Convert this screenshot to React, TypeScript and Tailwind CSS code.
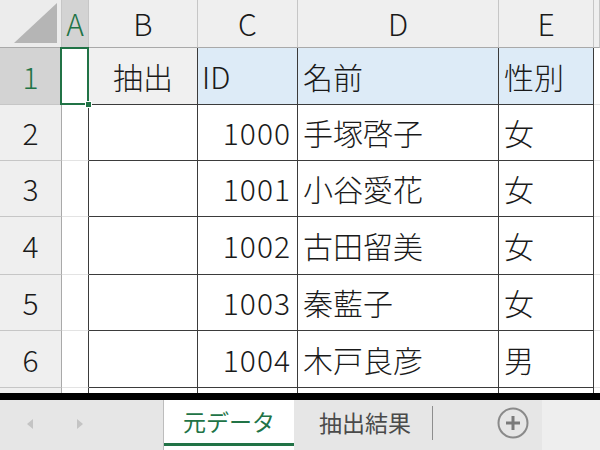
import React from 'react';

const font = { fontFamily: '"Noto Sans CJK JP", "Noto Sans", sans-serif' };

const cols = ['A', 'B', 'C', 'D', 'E', ''];

const data: string[][] = [
  ['1000', '手塚啓子', '女'],
  ['1001', '小谷愛花', '女'],
  ['1002', '古田留美', '女'],
  ['1003', '秦藍子', '女'],
  ['1004', '木戸良彦', '男'],
];

function Corner() {
  return (
    <div className="relative bg-[#ececec] border-r border-b border-r-[#c6c6c6] border-b-[#a9a9a9]">
      <svg className="absolute left-0 top-0" width="61" height="47" viewBox="0 0 61 47">
        <polygon points="14,43 57,43 57,3" fill="#b5b5b5" />
      </svg>
    </div>
  );
}

function ColHead({ label }: { label: string }) {
  const active = label === 'A';
  return (
    <div
      className={`flex items-center justify-center text-[30px] font-light border-r border-b border-r-[#c6c6c6] ${
        active ? 'bg-[#d3d3d3] text-[#217346] border-b-[#a9a9a9]' : 'bg-[#efefef] text-[#1a1a1a] border-b-[#a9a9a9]'
      }`}
    >
      {label}
    </div>
  );
}

function RowHead({ n, last }: { n: number | ''; last?: boolean }) {
  const active = n === 1;
  return (
    <div
      className={`flex items-center justify-center text-[30px] font-light border-r border-r-[#a9a9a9] ${
        last ? '' : 'border-b border-b-[#c6c6c6]'
      } ${active ? 'bg-[#d3d3d3] text-[#217346]' : 'bg-[#efefef] text-[#1a1a1a]'}`}
    >
      {n}
    </div>
  );
}

export default function App() {
  return (
    <div className="w-[600px] h-[450px] overflow-hidden bg-white flex flex-col" style={font}>
      <div className="grid grid-cols-[62px_27px_109px_100px_201px_95px_6px] grid-rows-[48px_57px_56px_56px_58px_56px_57px_5px] text-[#1a1a1a] font-light">
        <Corner />
        {cols.map((c, i) => (
          <ColHead key={i} label={c} />
        ))}

        {/* row 1 */}
        <RowHead n={1} />
        <div className="relative border-r border-b border-r-[#3b3b3b] border-b-[#e3e3e3]">
          <div className="absolute left-[-2px] top-[-1px] w-[29px] h-[58px] border-2 border-[#217346]" />
          <div className="absolute right-[-4px] bottom-[-4px] w-[7px] h-[7px] bg-[#217346] border border-white z-10" />
        </div>
        <div className="flex items-center justify-center text-[30px] bg-[#f0f0f0] border-r border-b border-[#3b3b3b]">抽出</div>
        <div className="flex items-center pl-[4px] text-[30px] bg-[#ddebf7] border-r border-b border-[#3b3b3b]">ID</div>
        <div className="flex items-center pl-[5px] text-[30px] bg-[#ddebf7] border-r border-b border-[#3b3b3b]">名前</div>
        <div className="flex items-center pl-[5px] text-[30px] bg-[#ddebf7] border-r border-b border-[#3b3b3b]">性別</div>
        <div className="border-b border-[#e3e3e3]" />

        {data.map((r, i) => (
          <React.Fragment key={i}>
            <RowHead n={i + 2} />
            <div className="border-r border-b border-r-[#3b3b3b] border-b-[#e3e3e3]" />
            <div className="border-r border-b border-[#3b3b3b]" />
            <div className="flex items-center justify-end pr-[6px] text-[30px] tracking-[1px] border-r border-b border-[#3b3b3b]">{r[0]}</div>
            <div className="flex items-center pl-[5px] text-[30px] border-r border-b border-[#3b3b3b]">{r[1]}</div>
            <div className="flex items-center pl-[5px] text-[30px] border-r border-b border-[#3b3b3b]">{r[2]}</div>
            <div className="border-b border-[#e3e3e3]" />
          </React.Fragment>
        ))}

        {/* partial row 7 */}
        <RowHead n="" last />
        <div className="border-r border-r-[#3b3b3b]" />
        <div className="border-r border-[#3b3b3b]" />
        <div className="border-r border-[#3b3b3b]" />
        <div className="border-r border-[#3b3b3b]" />
        <div className="border-r border-[#3b3b3b]" />
        <div />
      </div>

      <div className="h-[7px] bg-black" />

      {/* sheet tabs */}
      <div className="h-[50px] flex bg-[#e6e6e6]">
        <div className="w-[163px] flex items-center pb-[2px]">
          <svg className="ml-[26px]" width="8" height="12" viewBox="0 0 8 12">
            <polygon points="7,1 1,6 7,11" fill="#c4c4c4" />
          </svg>
          <svg className="ml-[42px]" width="8" height="12" viewBox="0 0 8 12">
            <polygon points="1,1 7,6 1,11" fill="#c4c4c4" />
          </svg>
        </div>
        <div className="w-[131px] flex flex-col bg-white border-l border-[#bdbdbd]">
          <div className="flex-1 flex items-center justify-center text-[23px] text-[#217346]">元データ</div>
          <div className="h-[3px] bg-[#217346] mb-[4px]" />
        </div>
        <div className="w-[138px] flex items-center justify-center text-[23px] text-[#4a4a4a] pb-[6px] pl-[4px]">抽出結果</div>
        <div className="flex items-center pb-[4px]">
          <div className="w-px h-[34px] bg-[#8e8e8e]" />
        </div>
        <div className="w-[109px] flex items-center justify-end pr-[13px] pb-[4px]">
          <svg width="32" height="32" viewBox="0 0 32 32">
            <circle cx="16" cy="16" r="14.5" fill="none" stroke="#8a8a8a" strokeWidth="2" />
            <line x1="16" y1="9" x2="16" y2="23" stroke="#7a7a7a" strokeWidth="3" />
            <line x1="9" y1="16" x2="23" y2="16" stroke="#7a7a7a" strokeWidth="3" />
          </svg>
        </div>
        <div className="flex-1 bg-[#eeeeee]" />
      </div>
    </div>
  );
}
